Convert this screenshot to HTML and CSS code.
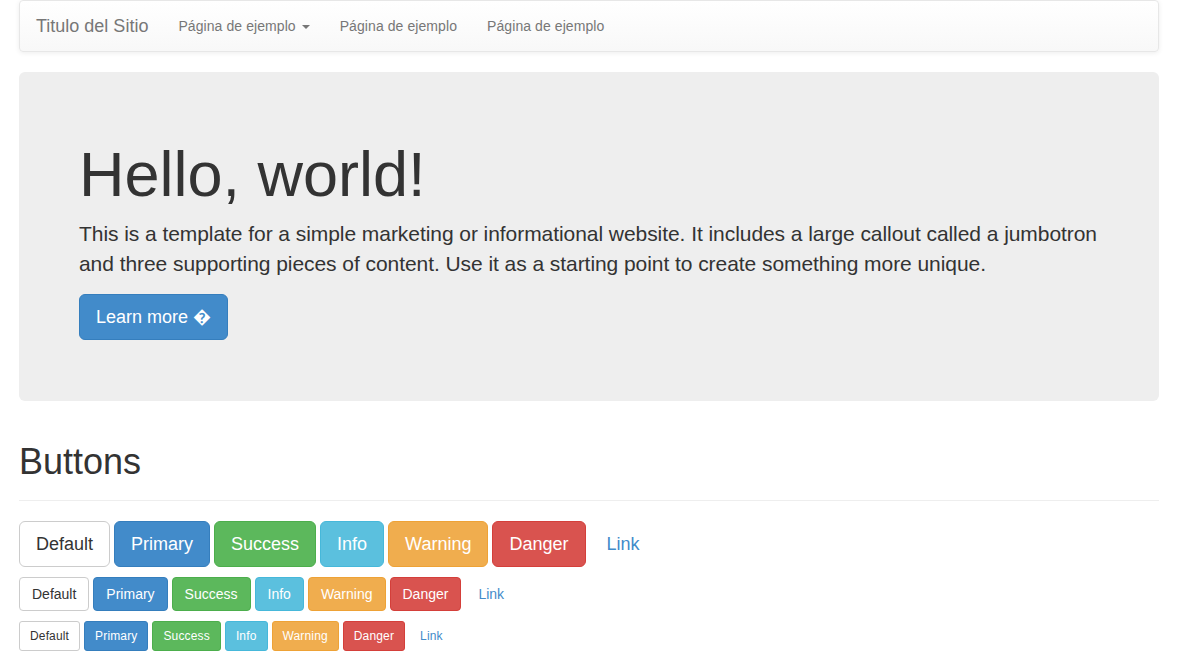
FILE: index.html
```html
<!DOCTYPE html>
<html lang="es">
<head>
<meta charset="utf-8">
<title>Theme</title>
<link rel="stylesheet" href="styles.css">
</head>
<body>
<div class="container">
  <nav class="navbar">
    <a class="brand" href="#">Titulo del Sitio</a>
    <ul class="nav">
      <li><a href="#">Página de ejemplo <span class="caret"></span></a></li>
      <li><a href="#">Página de ejemplo</a></li>
      <li><a href="#">Página de ejemplo</a></li>
    </ul>
  </nav>

  <div class="jumbotron">
    <h1>Hello, world!</h1>
    <p>This is a template for a simple marketing or informational website. It includes a large callout called a jumbotron and three supporting pieces of content. Use it as a starting point to create something more unique.</p>
    <p class="jumbo-action"><a class="btn btn-primary btn-lg" href="#">Learn more &#xFFFD;</a></p>
  </div>

  <div class="page-header">
    <h1>Buttons</h1>
  </div>

  <div class="btn-row btn-row-lg">
    <button class="btn btn-lg btn-default">Default</button>
    <button class="btn btn-lg btn-primary">Primary</button>
    <button class="btn btn-lg btn-success">Success</button>
    <button class="btn btn-lg btn-info">Info</button>
    <button class="btn btn-lg btn-warning">Warning</button>
    <button class="btn btn-lg btn-danger">Danger</button>
    <button class="btn btn-lg btn-link">Link</button>
  </div>
  <div class="btn-row">
    <button class="btn btn-default">Default</button>
    <button class="btn btn-primary">Primary</button>
    <button class="btn btn-success">Success</button>
    <button class="btn btn-info">Info</button>
    <button class="btn btn-warning">Warning</button>
    <button class="btn btn-danger">Danger</button>
    <button class="btn btn-link">Link</button>
  </div>
  <div class="btn-row">
    <button class="btn btn-sm btn-default">Default</button>
    <button class="btn btn-sm btn-primary">Primary</button>
    <button class="btn btn-sm btn-success">Success</button>
    <button class="btn btn-sm btn-info">Info</button>
    <button class="btn btn-sm btn-warning">Warning</button>
    <button class="btn btn-sm btn-danger">Danger</button>
    <button class="btn btn-sm btn-link">Link</button>
  </div>
</div>
</body>
</html>
```

FILE: styles.css
```css
* { box-sizing: border-box; }
html, body { margin: 0; padding: 0; }
body {
  font-family: "Liberation Sans", Arial, Helvetica, sans-serif;
  font-size: 14px;
  line-height: 1.428571;
  color: #333;
  background: #fff;
  overflow: hidden;
}
.container {
  width: 1140px;
  margin-left: 19px;
}
a { text-decoration: none; }

.navbar {
  display: flex;
  align-items: stretch;
  height: 52px;
  border: 1px solid #e7e7e7;
  border-radius: 4px;
  background: linear-gradient(to bottom, #fff 0, #f8f8f8 100%);
  box-shadow: inset 0 1px 0 rgba(255,255,255,.15), 0 1px 5px rgba(0,0,0,.075);
  margin-bottom: 20px;
}
.brand {
  padding: 15px 15px 15px 16px;
  font-size: 18px;
  line-height: 20px;
  color: #777;
}
.nav {
  list-style: none;
  margin: 0;
  padding: 0;
  display: flex;
}
.nav a {
  display: block;
  padding: 15px;
  line-height: 20px;
  color: #777;
  letter-spacing: 0.08px;
}
.caret {
  display: inline-block;
  width: 0;
  height: 0;
  margin-left: 2px;
  vertical-align: middle;
  border-top: 4px solid #777;
  border-left: 4px solid transparent;
  border-right: 4px solid transparent;
}

.jumbotron {
  background: #eee;
  border-radius: 6px;
  padding: 48px 60px;
  margin-bottom: 30px;
}
.jumbotron h1 {
  font-size: 63px;
  font-weight: 500;
  line-height: 1.1;
  margin: 20px 0 10px;
}
.jumbotron p {
  font-size: 21px;
  font-weight: 200;
  line-height: 30px;
  margin: 0 0 15px;
  letter-spacing: -0.06px;
}
.jumbotron p.jumbo-action {
  line-height: 1;
  margin-bottom: 13px;
  letter-spacing: 0;
}

.page-header {
  margin: 41px 0 20px;
  padding-bottom: 18px;
  border-bottom: 1px solid #eee;
}
.page-header h1 {
  font-size: 36px;
  font-weight: 500;
  line-height: 1.1;
  margin: 20px 0 0;
}

.btn-row {
  margin: 0 0 10px;
  display: flex;
  gap: 4px;
  align-items: center;
}
.btn {
  display: inline-block;
  font-family: inherit;
  font-size: 14px;
  line-height: 20px;
  padding: 6px 12px;
  border: 1px solid transparent;
  border-radius: 4px;
  cursor: pointer;
  white-space: nowrap;
  text-align: center;
  margin: 0;
}
.btn-lg {
  font-size: 18px;
  line-height: 24px;
  padding: 10px 16px;
  border-radius: 6px;
}
.btn-sm {
  font-size: 12px;
  line-height: 18px;
  padding: 5px 10px;
  border-radius: 3px;
  letter-spacing: 0.15px;
}
.btn-default { color: #333; background: #fff; border-color: #ccc; }
.btn-primary { color: #fff; background: #428bca; border-color: #357ebd; }
.btn-success { color: #fff; background: #5cb85c; border-color: #4cae4c; }
.btn-info { color: #fff; background: #5bc0de; border-color: #46b8da; }
.btn-warning { color: #fff; background: #f0ad4e; border-color: #eea236; }
.btn-danger { color: #fff; background: #d9534f; border-color: #d43f3a; }
.btn-link { color: #428bca; background: transparent; border-color: transparent; }
```
